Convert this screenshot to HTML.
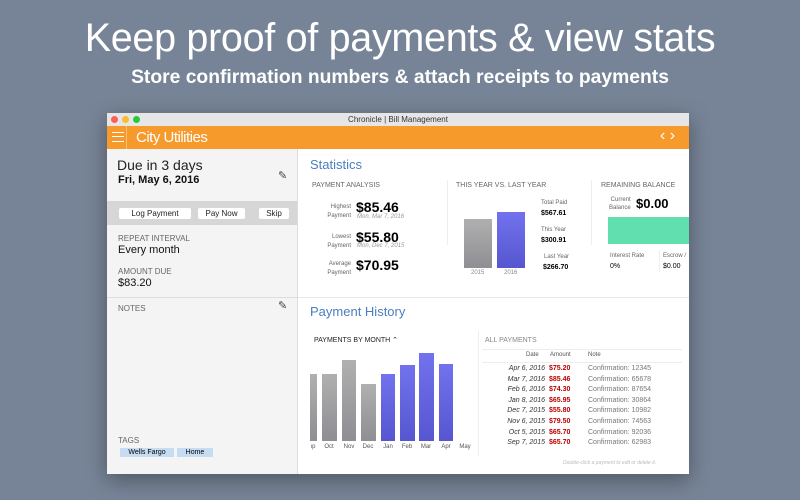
<!DOCTYPE html>
<html><head><meta charset="utf-8"><style>
*{margin:0;padding:0;box-sizing:border-box}
body{width:800px;height:500px;background:#778497;font-family:"Liberation Sans",sans-serif;position:relative;overflow:hidden}
.a{position:absolute;white-space:nowrap}
.h1{left:0;width:800px;text-align:center;top:16px;font-size:39.5px;color:#fff;font-weight:300;letter-spacing:-0.3px}
.h2{left:0;width:800px;text-align:center;top:67px;font-size:19.3px;color:#fff;font-weight:bold}
.win{position:absolute;left:107px;top:113px;width:582px;height:361px;background:#fff;box-shadow:0 6px 20px rgba(0,0,0,.35);overflow:hidden}
.tb{position:absolute;left:0;top:0;width:582px;height:13px;background:#e6e6e6;font-size:8px;color:#333;text-align:center;line-height:13px}
.dot{position:absolute;top:3px;width:7px;height:7px;border-radius:50%}
.ob{position:absolute;left:0;top:13px;width:582px;height:23px;background:#f79a2c}
.lp{position:absolute;left:0;top:36px;width:191px;height:325px;background:#f4f4f4;border-right:1px solid #ddd}
.g{color:#666;font-size:8px}
.btn{position:absolute;height:11px;background:#fff;border-radius:2px;font-size:8px;line-height:11px;text-align:center;color:#222}
.bar{position:absolute}
.gr{background:linear-gradient(#b0b0b0,#8e8e93)}
.bl{background:linear-gradient(#7272ee,#5656d0)}
.r{color:#b00;font-weight:bold}
.ml{position:absolute;top:331px;font-size:6px;color:#555;width:20px;text-align:center}
</style></head><body>
<div class="a h1">Keep proof of payments &amp; view stats</div>
<div class="a h2">Store confirmation numbers &amp; attach receipts to payments</div>
<div class="win">
<div class="tb">Chronicle | Bill Management
<div class="dot" style="left:4px;background:#fc5f57"></div><div class="dot" style="left:15px;background:#fdbc2e"></div><div class="dot" style="left:26px;background:#28c840"></div></div>
<div class="ob">
<div class="a" style="left:5px;top:6px;width:12px;height:10px;border-top:1px solid #fff;border-bottom:1px solid #fff"><div style="margin-top:3px;border-top:1px solid #fff"></div></div>
<div class="a" style="left:19px;top:0;width:1px;height:23px;background:#fbc07a"></div>
<div class="a" style="left:29px;top:3px;font-size:15px;color:#fff;letter-spacing:-0.5px">City Utilities</div>
<div class="a" style="left:553px;top:1px;font-size:16px;color:#fff">‹ ›</div>
</div>
<div class="lp">
<div class="a" style="left:10px;top:8px;font-size:14px;color:#222">Due in 3 days</div>
<div class="a" style="left:11px;top:25px;font-size:11px;font-weight:bold;color:#111">Fri, May 6, 2016</div>
<div class="a" style="left:171px;top:20px;font-size:11px;color:#444">✎</div>
<div class="a" style="left:0;top:52px;width:190px;height:24px;background:#d6d6d6"></div>
<div class="btn" style="left:12px;top:59px;width:72px">Log Payment</div>
<div class="btn" style="left:91px;top:59px;width:47px">Pay Now</div>
<div class="btn" style="left:152px;top:59px;width:30px">Skip</div>
<div class="a g" style="left:11px;top:85px">REPEAT INTERVAL</div>
<div class="a" style="left:11px;top:95px;font-size:11px;color:#111">Every month</div>
<div class="a g" style="left:11px;top:118px">AMOUNT DUE</div>
<div class="a" style="left:11px;top:128px;font-size:11px;color:#111">$83.20</div>
<div class="a" style="left:0;top:148px;width:190px;height:1px;background:#ddd"></div>
<div class="a g" style="left:11px;top:155px">NOTES</div>
<div class="a" style="left:171px;top:150px;font-size:11px;color:#444">✎</div>
<div class="a g" style="left:11px;top:287px">TAGS</div>
<div class="a" style="left:13px;top:299px;width:54px;height:9px;background:#c6dcf3;font-size:7px;text-align:center;line-height:9px">Wells Fargo</div>
<div class="a" style="left:70px;top:299px;width:36px;height:9px;background:#c6dcf3;font-size:7px;text-align:center;line-height:9px">Home</div>
</div>
<div class="a" style="left:203px;top:44px;font-size:13px;color:#4a7fbf">Statistics</div>
<div class="a g" style="left:205px;top:69px;font-size:7px">PAYMENT ANALYSIS</div>
<div class="a" style="left:340px;top:67px;width:1px;height:65px;background:#eee"></div>
<div class="a" style="left:484px;top:67px;width:1px;height:65px;background:#eee"></div>
<div class="a g" style="left:214px;top:90px;font-size:6px;text-align:right;width:30px;line-height:9px">Highest<br>Payment</div>
<div class="a" style="left:249px;top:86px;font-size:14px;font-weight:bold">$85.46</div>
<div class="a" style="left:250px;top:101px;font-size:6px;color:#999;font-style:italic">Mon, Mar 7, 2016</div>
<div class="a g" style="left:214px;top:120px;font-size:6px;text-align:right;width:30px;line-height:9px">Lowest<br>Payment</div>
<div class="a" style="left:249px;top:116px;font-size:14px;font-weight:bold">$55.80</div>
<div class="a" style="left:250px;top:130px;font-size:6px;color:#999;font-style:italic">Mon, Dec 7, 2015</div>
<div class="a g" style="left:214px;top:147px;font-size:6px;text-align:right;width:30px;line-height:9px">Average<br>Payment</div>
<div class="a" style="left:249px;top:144px;font-size:14px;font-weight:bold">$70.95</div>
<div class="a g" style="left:349px;top:69px;font-size:7px">THIS YEAR VS. LAST YEAR</div>
<div class="bar gr" style="left:357px;top:106px;width:28px;height:49px"></div>
<div class="bar bl" style="left:390px;top:99px;width:28px;height:56px"></div>
<div class="a" style="left:364px;top:157px;font-size:6px;color:#888">2015</div>
<div class="a" style="left:397px;top:157px;font-size:6px;color:#888">2016</div>
<div class="a" style="left:434px;top:87px;font-size:6px;color:#666">Total Paid</div>
<div class="a" style="left:434px;top:97px;font-size:7px;font-weight:bold">$567.61</div>
<div class="a" style="left:434px;top:114px;font-size:6px;color:#666">This Year</div>
<div class="a" style="left:434px;top:124px;font-size:7px;font-weight:bold">$300.91</div>
<div class="a" style="left:437px;top:141px;font-size:6px;color:#666">Last Year</div>
<div class="a" style="left:436px;top:151px;font-size:7px;font-weight:bold">$266.70</div>
<div class="a g" style="left:494px;top:69px;font-size:7px">REMAINING BALANCE</div>
<div class="a" style="left:502px;top:83px;font-size:6px;color:#666;line-height:8px;text-align:right">Current<br>Balance</div>
<div class="a" style="left:529px;top:83px;font-size:13px;font-weight:bold">$0.00</div>
<div class="a" style="left:501px;top:104px;width:81px;height:27px;background:#62dfae"></div>
<div class="a" style="left:503px;top:140px;font-size:6px;color:#666">Interest Rate</div>
<div class="a" style="left:503px;top:150px;font-size:7px">0%</div>
<div class="a" style="left:552px;top:137px;width:1px;height:22px;background:#eee"></div>
<div class="a" style="left:556px;top:140px;font-size:6px;color:#666">Escrow /</div>
<div class="a" style="left:556px;top:150px;font-size:7px">$0.00</div>
<div class="a" style="left:191px;top:184px;width:391px;height:1px;background:#e6e6e6"></div>
<div class="a" style="left:203px;top:191px;font-size:13px;color:#4a7fbf">Payment History</div>
<div class="a" style="left:207px;top:223px;font-size:7px;color:#222">PAYMENTS BY MONTH ⌃</div>
<div class="bar gr" style="left:203px;top:261px;width:7px;height:67px"></div>
<div class="bar gr" style="left:215px;top:261px;width:15px;height:67px"></div>
<div class="bar gr" style="left:235px;top:247px;width:14px;height:81px"></div>
<div class="bar gr" style="left:254px;top:271px;width:15px;height:57px"></div>
<div class="bar bl" style="left:274px;top:261px;width:14px;height:67px"></div>
<div class="bar bl" style="left:293px;top:252px;width:15px;height:76px"></div>
<div class="bar bl" style="left:312px;top:240px;width:15px;height:88px"></div>
<div class="bar bl" style="left:332px;top:251px;width:14px;height:77px"></div>
<div class="ml" style="left:196px">ıp</div>
<div class="ml" style="left:212px">Oct</div>
<div class="ml" style="left:232px">Nov</div>
<div class="ml" style="left:251px">Dec</div>
<div class="ml" style="left:271px">Jan</div>
<div class="ml" style="left:290px">Feb</div>
<div class="ml" style="left:309px">Mar</div>
<div class="ml" style="left:329px">Apr</div>
<div class="ml" style="left:348px">May</div>
<div class="a" style="left:371px;top:218px;width:1px;height:125px;background:#eee"></div>
<div class="a g" style="left:378px;top:224px;font-size:7px;color:#888">ALL PAYMENTS</div>
<div class="a" style="left:375px;top:236px;width:200px;height:1px;background:#eee"></div>
<div class="a" style="left:375px;top:249px;width:200px;height:1px;background:#eee"></div>
<div class="a" style="left:419px;top:239px;font-size:6px;color:#555">Date</div>
<div class="a" style="left:443px;top:239px;font-size:6px;color:#555">Amount</div>
<div class="a" style="left:481px;top:239px;font-size:6px;color:#555">Note</div>
<div class="a" style="left:370px;top:251px;width:68px;text-align:right;font-size:7px;font-style:italic;color:#333;line-height:10.6px">Apr 6, 2016<br>Mar 7, 2016<br>Feb 6, 2016<br>Jan 8, 2016<br>Dec 7, 2015<br>Nov 6, 2015<br>Oct 5, 2015<br>Sep 7, 2015</div>
<div class="a r" style="left:442px;top:251px;font-size:7px;line-height:10.6px">$75.20<br>$85.46<br>$74.30<br>$65.95<br>$55.80<br>$79.50<br>$65.70<br>$65.70</div>
<div class="a" style="left:481px;top:251px;font-size:7px;color:#777;line-height:10.6px">Confirmation: 12345<br>Confirmation: 65678<br>Confirmation: 87654<br>Confirmation: 30864<br>Confirmation: 10982<br>Confirmation: 74563<br>Confirmation: 92036<br>Confirmation: 62983</div>
<div class="a" style="left:456px;top:347px;font-size:5px;color:#bbb;font-style:italic">Double-click a payment to edit or delete it.</div>
</div>
</body></html>
